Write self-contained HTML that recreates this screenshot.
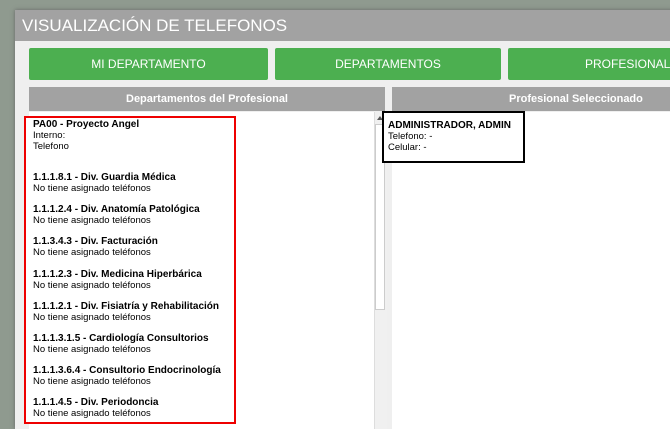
<!DOCTYPE html><html><head><style>
html,body{margin:0;width:670px;height:429px;overflow:hidden}
body{background:#8f9a8f;font-family:"Liberation Sans",sans-serif;position:relative}
.dlg{position:absolute;left:15px;top:10px;width:660px;height:419px;background:#efefef;box-shadow:0 0 4px #666;overflow:hidden}
.title{height:31px;background:#a2a2a2;color:#fff;font-size:17px;line-height:32px;padding-left:7px}
.btn{position:absolute;top:38px;height:32px;background:#4caf50;color:#fff;font-size:12px;line-height:32px;text-align:center;border-radius:2px}
.hdr{position:absolute;top:77px;height:24px;background:#a2a2a2;color:#fff;font-weight:bold;font-size:11px;line-height:24px;text-align:center}
.pane{position:absolute;background:#fff}
.t{font-weight:bold;font-size:10px;line-height:11px;white-space:nowrap}
.s{font-size:9.5px;line-height:11px;color:#000;white-space:nowrap}
.g{height:10.2px}
</style></head><body>
<div class="dlg">
<div class="title">VISUALIZACIÓN DE TELEFONOS</div>
<div class="btn" style="left:14px;width:239px">MI DEPARTAMENTO</div>
<div class="btn" style="left:260px;width:226px">DEPARTAMENTOS</div>
<div class="btn" style="left:493px;width:180px;text-align:left;padding-left:77px">PROFESIONALES</div>
<div class="hdr" style="left:14px;width:356px">Departamentos del Profesional</div>
<div class="hdr" style="left:377px;width:290px;text-align:left;padding-left:117px">Profesional Seleccionado</div>
<div class="pane" style="left:14px;top:102px;width:345px;height:330px"></div>
<div style="position:absolute;left:359px;top:102px;width:12px;height:330px;background:#f0f0f0;border-left:1px solid #ddd"></div>
<div style="position:absolute;left:360px;top:114px;width:10px;height:186px;background:#fff;border:1px solid #ccc;box-sizing:border-box"></div>
<div style="position:absolute;left:362px;top:106px;width:0;height:0;border:3px solid transparent;border-bottom:4px solid #555;border-top:0"></div>
<div class="pane" style="left:377px;top:102px;width:290px;height:330px"></div>
<div style="position:absolute;left:9px;top:106px;width:212px;height:308px;border:2px solid #e00;box-sizing:border-box;background:#fff;padding:1px 0 0 7px;overflow:hidden">
<div class="t">PA00 - Proyecto Angel</div><div class="s">Interno:</div><div class="s">Telefono</div>
<div style="height:20px"></div>
<div class="t">1.1.1.8.1 - Div. Guardia Médica</div><div class="s">No tiene asignado teléfonos</div><div class="g"></div>
<div class="t">1.1.1.2.4 - Div. Anatomía Patológica</div><div class="s">No tiene asignado teléfonos</div><div class="g"></div>
<div class="t">1.1.3.4.3 - Div. Facturación</div><div class="s">No tiene asignado teléfonos</div><div class="g"></div>
<div class="t">1.1.1.2.3 - Div. Medicina Hiperbárica</div><div class="s">No tiene asignado teléfonos</div><div class="g"></div>
<div class="t">1.1.1.2.1 - Div. Fisiatría y Rehabilitación</div><div class="s">No tiene asignado teléfonos</div><div class="g"></div>
<div class="t">1.1.1.3.1.5 - Cardiología Consultorios</div><div class="s">No tiene asignado teléfonos</div><div class="g"></div>
<div class="t">1.1.1.3.6.4 - Consultorio Endocrinología</div><div class="s">No tiene asignado teléfonos</div><div class="g"></div>
<div class="t">1.1.1.4.5 - Div. Periodoncia</div><div class="s">No tiene asignado teléfonos</div>
</div>
<div style="position:absolute;left:367px;top:101px;width:143px;height:52px;border:2px solid #000;box-sizing:border-box;background:#fff;padding:7px 0 0 4px">
<div class="t">ADMINISTRADOR, ADMIN</div><div class="s">Telefono: -</div><div class="s">Celular: -</div>
</div>
</div>
</body></html>
